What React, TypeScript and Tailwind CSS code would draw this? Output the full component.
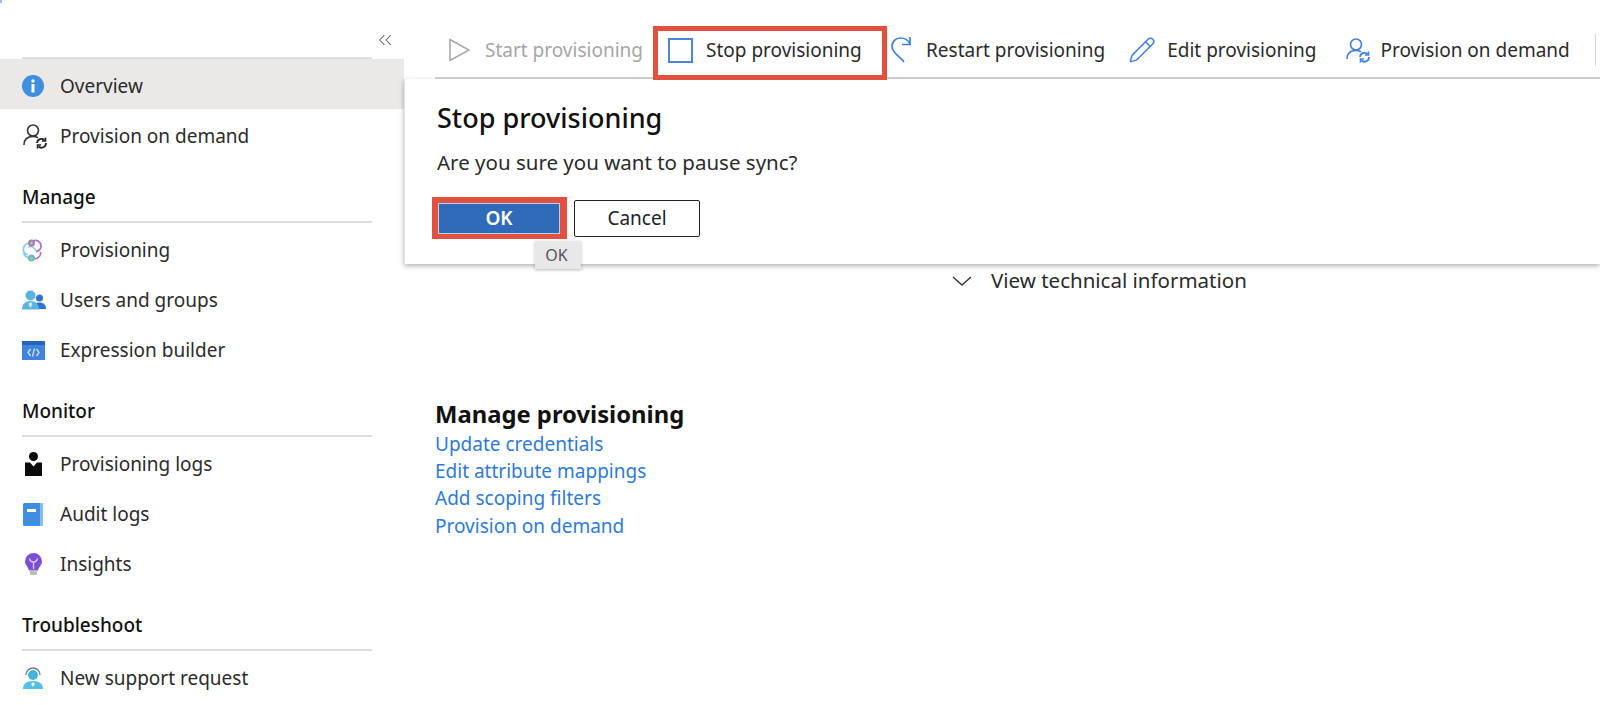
import { ChevronsLeft, Pencil } from "lucide-react";

const font = "font-['Noto_Sans',sans-serif]";

function SyncUser({ color, arrow }: { color: string; arrow: string }) {
  return (
    <svg width="26" height="26" viewBox="0 0 26 26" fill="none">
      <circle cx="11" cy="7.5" r="5.500" stroke={color} strokeWidth="1.600" />
      <path d="M2 22c0-5 3-8.500 9-8.500 2 0 3.500.4 5 1.300" stroke={color} strokeWidth="1.600" />
      <path d="M15 20a4.500 4.500 0 0 1 7.500-3M24 20a4.500 4.500 0 0 1-7.500 3.500" stroke={arrow} strokeWidth="1.800" />
      <path d="M23.500 14.500v3.500H20M15.500 25.500V22H19" stroke={arrow} strokeWidth="1.600" />
    </svg>
  );
}

function InfoIcon() {
  return (
    <svg width="22" height="22" viewBox="0 0 22 22">
      <circle cx="11" cy="11" r="11" fill="#3f8fe0" />
      <rect x="9.500" y="9" width="3" height="8.500" fill="#fff" />
      <circle cx="11" cy="6" r="1.700" fill="#fff" />
    </svg>
  );
}

function ProvisioningIcon() {
  return (
    <svg width="20" height="25" viewBox="0 0 20 25" fill="none">
      <path d="M7 5C3 6 1 9 1.500 12.500 2 15 4 16.500 6 16.500" stroke="#8fcbea" strokeWidth="1.800" />
      <path d="M11 3c4-2 8 1 8 5 0 3-2 5-5 5.500" stroke="#a878c6" strokeWidth="1.800" />
      <path d="M13 21c4-1 6-4 5.500-7" stroke="#a878c6" strokeWidth="1.800" />
      <path d="M7 20C4 19 2 17 2 15" stroke="#8fcbea" strokeWidth="1.800" />
      <path d="M6 9c3-1 6 0 8 4" stroke="#8fcbea" strokeWidth="1.500" />
      <circle cx="9.500" cy="5" r="3.500" fill="#a878c6" />
      <circle cx="9.500" cy="20" r="3.500" fill="#67b7d8" />
      <circle cx="9.500" cy="5" r="1.500" fill="#a8d84f" />
      <circle cx="9.500" cy="20" r="1.500" fill="#a8d84f" />
    </svg>
  );
}

function UsersIcon() {
  return (
    <svg width="24" height="20" viewBox="0 0 24 20">
      <circle cx="17.500" cy="8" r="3.500" fill="#2f73cc" />
      <path d="M11 19c0-4 2-6.500 6.500-6.500s6.500 2.500 6.500 6.500z" fill="#2f73cc" />
      <circle cx="8.500" cy="5.500" r="5" fill="#5ab4e0" />
      <path d="M0 19.500c0-5 3-8.500 8.500-8.500s8.500 3.500 8.500 8.500z" fill="#5ab4e0" />
      <path d="M8.500 12l-2 2 2 4 2-4z" fill="#d9f0fa" />
    </svg>
  );
}

function ExpressionIcon() {
  return (
    <div className="flex h-[19px] w-[23px] flex-col bg-[#4383e0]">
      <div className="h-[4px] bg-[#2a63b8]" />
      <svg width="23" height="15" viewBox="0 0 23 15" fill="none" stroke="#cfe2fa" strokeWidth="1.300">
        <path d="M8.500 4 6 7.500 8.500 11M14.500 4 17 7.500 14.500 11M12.500 3.500l-2 8" />
      </svg>
    </div>
  );
}

function LogsIcon() {
  return (
    <svg className="ml-[3px]" width="17" height="24" viewBox="0 0 17 24">
      <circle cx="8.500" cy="4.500" r="4.500" fill="#0b0b0b" />
      <path d="M0 10.500h5l3.500 4 3.500-4h5V24H0z" fill="#0b0b0b" />
    </svg>
  );
}

function AuditIcon() {
  return (
    <svg className="ml-[1px]" width="20" height="23" viewBox="0 0 20 23">
      <rect x="0" y="0" width="20" height="23" rx="1.500" fill="#3f8ee0" />
      <rect x="17" y="0" width="3" height="23" fill="#86bcf0" />
      <rect x="4" y="6" width="9" height="3" fill="#fff" />
    </svg>
  );
}

function InsightsIcon() {
  return (
    <svg className="ml-[3px]" width="17" height="22" viewBox="0 0 17 22" fill="none">
      <path d="M8.500 0a8.500 8.500 0 0 0-8.500 8.500c0 3.500 3 5 4 9h9c1-4 4-5.500 4-9A8.500 8.500 0 0 0 8.500 0z" fill="#7c4fd6" />
      <path d="M8.500 16V9M4.500 5.500C5 8 7 9 8.500 9s3.500-1 4-3.500" stroke="#d6c5f5" strokeWidth="1.400" />
      <rect x="5" y="17.500" width="7" height="4.500" rx="1" fill="#bdbdbd" />
    </svg>
  );
}

function SupportIcon() {
  return (
    <svg className="ml-[1px]" width="20" height="24" viewBox="0 0 20 24" fill="none">
      <path d="M3 9a7 7 0 0 1 14 0" stroke="#777" strokeWidth="1.300" />
      <circle cx="10" cy="9" r="5" fill="#44b4dc" />
      <path d="M0 23c0-5 3-8 10-8s10 3 10 8z" fill="#56c0e4" />
      <path d="M10 16l-2 2 2 3 2-3z" fill="#e5f6fc" />
    </svg>
  );
}

function PlayOutline() {
  return (
    <svg className="mr-[15px]" width="21" height="24" viewBox="0 0 21 24" fill="none" stroke="#a6a6a6" strokeWidth="1.500">
      <path d="M1 1.500v21L20 12z" />
    </svg>
  );
}

function RestartIcon() {
  return (
    <svg className="ml-[4px] mr-[15px]" width="20" height="27" viewBox="0 0 20 27" fill="none" stroke="#3f7fdc" strokeWidth="1.700">
      <path d="M19 7C17 2.500 13 1 9.500 1 4.500 1 1 4.500 1 9.500 1 15.500 8 19 13 25" />
      <path d="M19 0v7.500h-8" />
    </svg>
  );
}

function NavItem({ icon, label, active }: { icon: React.ReactNode; label: string; active?: boolean }) {
  return (
    <div className={`flex h-[50px] items-center pl-[22px] pt-[4px] ${active ? "bg-[#ebe9e8]" : ""}`}>
      <div className="flex w-[38px] shrink-0 items-center">{icon}</div>
      <span className="text-[19px] text-[#2b2b2b]">{label}</span>
    </div>
  );
}

function NavSection({ title, children }: { title: string; children: React.ReactNode }) {
  return (
    <div className="mt-[24px]">
      <div className="ml-[22px] mr-[32px] h-[40px] border-b-2 border-[#dcdcdc] text-[19px] font-medium leading-[28px] text-[#111]">{title}</div>
      <div>{children}</div>
    </div>
  );
}

function ToolbarItem({ icon, label, disabled, className }: { icon: React.ReactNode; label: string; disabled?: boolean; className?: string }) {
  return (
    <div className={`flex items-center ${className ?? ""}`}>
      {icon}
      <span className={`text-[19px] whitespace-nowrap ${disabled ? "text-[#a6a6a6]" : "text-[#2b2b2b]"}`}>{label}</span>
    </div>
  );
}

export default function App() {
  return (
    <div className={`relative flex h-[705px] w-[1600px] overflow-hidden bg-white ${font}`}>
      <div className="absolute left-0 top-0 h-[3px] w-[2px] bg-[#9db8f5]" />
      <aside className="w-[404px] shrink-0">
        <div className="ml-[22px] mr-[32px] flex h-[59px] justify-end border-b-2 border-[#dcdcdc] pt-[29px]">
          <ChevronsLeft size={22} strokeWidth={1.1} className="relative left-[24px] text-[#666]" />
        </div>
        <NavItem active icon={<InfoIcon />} label="Overview" />
        <NavItem icon={<SyncUser color="#333" arrow="#222" />} label="Provision on demand" />
        <NavSection title="Manage">
          <NavItem icon={<ProvisioningIcon />} label="Provisioning" />
          <NavItem icon={<UsersIcon />} label="Users and groups" />
          <NavItem icon={<ExpressionIcon />} label="Expression builder" />
        </NavSection>
        <NavSection title="Monitor">
          <NavItem icon={<LogsIcon />} label="Provisioning logs" />
          <NavItem icon={<AuditIcon />} label="Audit logs" />
          <NavItem icon={<InsightsIcon />} label="Insights" />
        </NavSection>
        <NavSection title="Troubleshoot">
          <NavItem icon={<SupportIcon />} label="New support request" />
        </NavSection>
      </aside>

      <main className="min-w-0 flex-1">
        <div className="ml-[31px] mt-[26px] flex h-[53px] items-center border-b-2 border-[#d4d4d4] pb-[3px] pl-[14px]">
          <ToolbarItem icon={<PlayOutline />} label="Start provisioning" disabled />
          <ToolbarItem
            className="relative z-10 ml-[10px] h-[54px] w-[234px] self-start border-[5px] border-[#e2503f] pb-[6px] pl-[10px]"
            icon={<div className="mr-[13px] h-[25px] w-[25px] border-2 border-[#4a86dc]" />}
            label="Stop provisioning"
          />
          <ToolbarItem icon={<RestartIcon />} label="Restart provisioning" />
          <ToolbarItem className="ml-[23px]" icon={<Pencil size={28} strokeWidth={1.3} className="mr-[11px] text-[#3f7fdc]" />} label="Edit provisioning" />
          <ToolbarItem className="ml-[28px]" icon={<span className="mr-[10px]"><SyncUser color="#3f7fdc" arrow="#3f7fdc" /></span>} label="Provision on demand" />
          <div className="ml-[25px] h-[32px] w-px bg-[#d4d4d4]" />
        </div>

        <section className="h-[185px] border-l border-[#e2e2e2] pl-[32px] pt-[21px] shadow-[0_2px_5px_rgba(0,0,0,0.3)]">
          <h2 className="text-[27px] font-medium leading-[36px] text-[#111]">Stop provisioning</h2>
          <p className="mt-[13px] text-[20.5px] leading-[26px] text-[#2b2b2b]">Are you sure you want to pause sync?</p>
          <div className="relative mt-[22px] flex items-center">
            <div className="-ml-[5px] h-[42px] w-[135px] border-b-[5px] border-l-[6px] border-r-[7px] border-t-[6px] border-[#e2503f]">
              <button className="h-full w-full border border-[#b9d0ee] bg-[#2f6bb8] text-[19px] font-semibold leading-none text-white">OK</button>
            </div>
            <button className="ml-[7px] h-[37px] w-[126px] rounded-[2px] border border-[#222] text-[19px] leading-none text-[#222]">Cancel</button>
            <div className="absolute left-[98px] top-[44px] z-10 flex h-[28px] w-[46px] items-center justify-center bg-[#e8e8e8] pr-[3px] text-[16px] text-[#555] shadow-[0_1px_3px_rgba(0,0,0,0.25)]">OK</div>
          </div>
        </section>

        <div className="ml-[548px] mt-[1px] flex h-[30px] items-center">
          <svg className="mr-[19px] mt-[2px]" width="20" height="10" viewBox="0 0 20 10" fill="none" stroke="#333" strokeWidth="1.400">
            <path d="M1 1l9 8 9-8" />
          </svg>
          <span className="text-[20.5px] text-[#2b2b2b]">View technical information</span>
        </div>

        <div className="ml-[31px] mt-[102px]">
          <h3 className="text-[23.8px] font-bold leading-[34px] text-[#111]">Manage provisioning</h3>
          <div className="flex flex-col items-start">
            {["Update credentials", "Edit attribute mappings", "Add scoping filters", "Provision on demand"].map((link) => (
              <a key={link} className="text-[19px] leading-[27.2px] text-[#2f7ad6]">{link}</a>
            ))}
          </div>
        </div>
      </main>
    </div>
  );
}
